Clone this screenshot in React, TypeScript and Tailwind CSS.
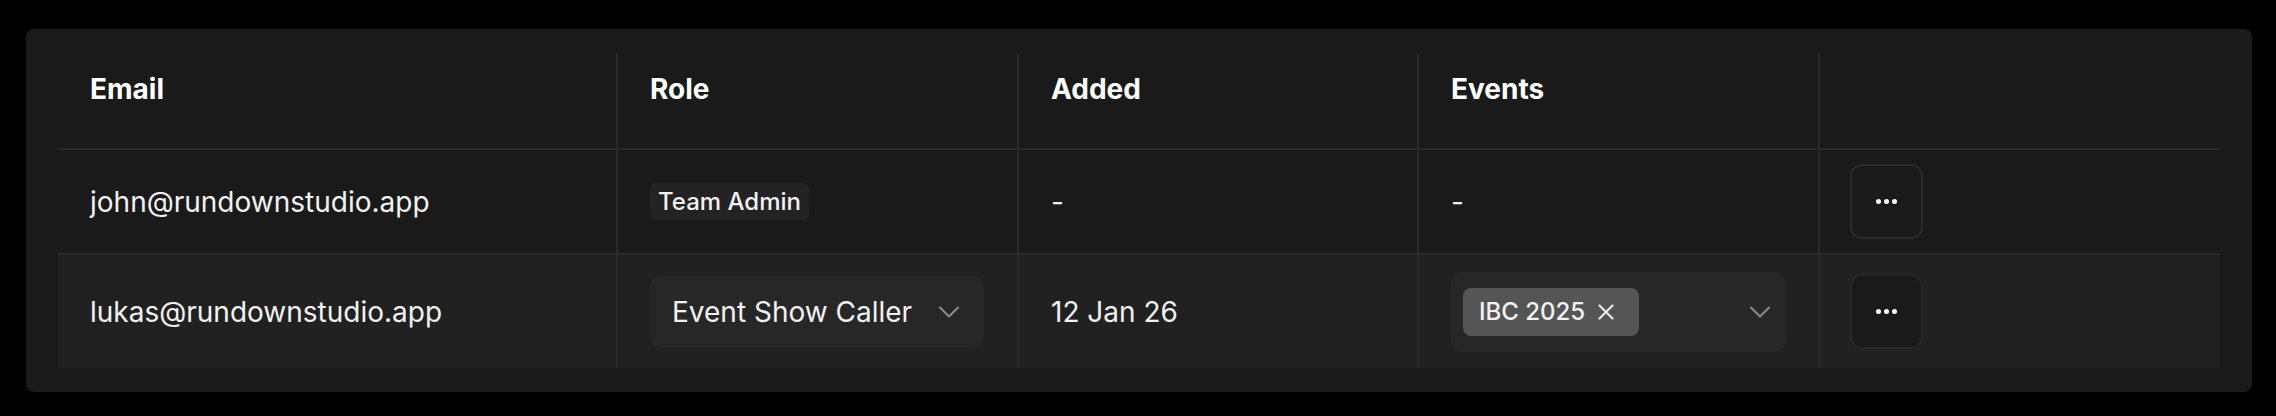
import React from "react";
import { ChevronDown, X } from "lucide-react";

const cols = "grid grid-cols-[558px_401px_400px_401px_1fr]";

function Dots() {
  return (
    <svg width="21" height="5" viewBox="0 0 21 5" fill="#ffffff">
      <circle cx="2.5" cy="2.5" r="2.5" />
      <circle cx="10.5" cy="2.5" r="2.5" />
      <circle cx="18.5" cy="2.5" r="2.5" />
    </svg>
  );
}

export default function App() {
  return (
    <div className="min-h-screen bg-black pt-[29px] pl-[26px] pr-[24px] font-['Inter',sans-serif] text-[#f2f2f2]">
      <div className="rounded-lg bg-[#1a1a1a] px-8 py-6">
        {/* Header */}
        <div className={`${cols} h-[97px] border-b-2 border-[#2a2a2a] text-[28px] font-bold leading-[40px] text-white`}>
          <div className="pl-8 pt-4">Email</div>
          <div className="border-l-2 border-[#2a2a2a] pl-8 pt-4">Role</div>
          <div className="border-l-2 border-[#2a2a2a] pl-8 pt-4">Added</div>
          <div className="border-l-2 border-[#2a2a2a] pl-8 pt-4">Events</div>
          <div className="border-l-2 border-[#2a2a2a]" />
        </div>

        {/* Row 1 */}
        <div className={`${cols} h-[105px] border-b-2 border-[#2a2a2a] text-[28px] leading-[40px]`}>
          <div className="flex items-center pl-8">john@rundownstudio.app</div>
          <div className="flex items-center border-l-2 border-[#2a2a2a] pl-8">
            <span className="flex h-[37px] items-center rounded-md bg-[#232323] px-2 text-[24px] font-medium">Team Admin</span>
          </div>
          <div className="flex items-center border-l-2 border-[#2a2a2a] pl-8">-</div>
          <div className="flex items-center border-l-2 border-[#2a2a2a] pl-8">-</div>
          <div className="flex items-center border-l-2 border-[#2a2a2a] pl-[30px]">
            <button className="flex h-[75px] w-[73px] items-center justify-center rounded-xl border-2 border-[#2a2a2a]">
              <Dots />
            </button>
          </div>
        </div>

        {/* Row 2 */}
        <div className={`${cols} h-[113px] bg-[#212121] text-[28px] leading-[40px]`}>
          <div className="flex items-center pl-8">lukas@rundownstudio.app</div>
          <div className="flex items-center border-l-2 border-[#2a2a2a] pl-8">
            <div className="flex h-[71px] w-[334px] items-center justify-between rounded-[10px] bg-[#272727] pl-[22px] pr-[17px]">
              <span>Event Show Caller</span>
              <ChevronDown size={36} strokeWidth={1.4} className="text-[#8a8a8a]" />
            </div>
          </div>
          <div className="flex items-center border-l-2 border-[#2a2a2a] pl-8">12 Jan 26</div>
          <div className="flex items-center border-l-2 border-[#2a2a2a] pl-8">
            <div className="flex h-[80px] w-[335px] items-center justify-between rounded-[12px] bg-[#272727] pl-3 pr-2">
              <span className="flex h-[48px] items-center gap-2 rounded-lg bg-[#555555] pl-4 pr-5 text-[24px] font-medium">
                IBC 2025
                <X size={26} strokeWidth={2} className="text-[#e8e8e8]" />
              </span>
              <ChevronDown size={36} strokeWidth={1.4} className="text-[#8a8a8a]" />
            </div>
          </div>
          <div className="flex items-center border-l-2 border-[#2a2a2a] pl-[30px]">
            <button className="flex h-[75px] w-[73px] items-center justify-center rounded-xl border-2 border-[#262626] bg-[#1a1a1a]">
              <Dots />
            </button>
          </div>
        </div>
      </div>
    </div>
  );
}
